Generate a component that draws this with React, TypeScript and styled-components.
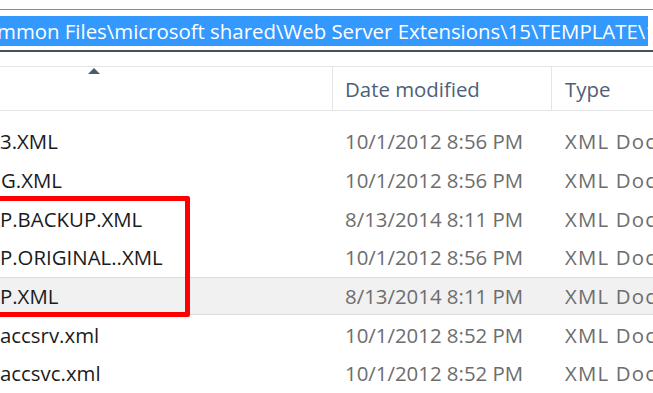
import React from "react";
import styled, { createGlobalStyle } from "styled-components";

const Global = createGlobalStyle`
  html, body { margin: 0; padding: 0; background: #ffffff; }
  body { font-family: "Open Sans", "Noto Sans", sans-serif; overflow: hidden; }
  * { box-sizing: border-box; }
`;

const Page = styled.div`
  position: relative;
  width: 653px;
  height: 393px;
  overflow: hidden;
  background: #ffffff;
`;

const AddressBar = styled.div`
  margin-top: 9px;
  border-top: 1px solid #8c8c8c;
  border-bottom: 2px solid #44505e;
  padding: 6px 0 4px 0;
`;

const Selection = styled.div`
  width: 648px;
  height: 30px;
  background: #3399ff;
  color: #ffffff;
  font-size: 20.4px;
  line-height: 30px;
  white-space: nowrap;
  overflow: hidden;
`;

const SelectionText = styled.span`
  display: inline-block;
  margin-left: -3px;
`;

const Columns = styled.div`
  display: grid;
  grid-template-columns: 333px 219px 1fr;
`;

const Header = styled(Columns)`
  margin-top: 14px;
  height: 45px;
  border-top: 1px solid #e5e5e5;
  border-bottom: 1px solid #e5e5e5;
`;

const HeaderCell = styled.div<{ $pad: number; $divider?: boolean }>`
  display: flex;
  align-items: center;
  padding-left: ${(p) => p.$pad}px;
  border-right: ${(p) => (p.$divider ? "1px solid #e5e5e5" : "none")};
  color: #4c607a;
  font-size: 20.4px;
  white-space: nowrap;
  overflow: hidden;
`;

const SortCell = styled(HeaderCell)`
  align-items: flex-start;
  padding-top: 1px;
`;

const SortArrow = styled.span`
  width: 0;
  height: 0;
  border-left: 6px solid transparent;
  border-right: 6px solid transparent;
  border-bottom: 6px solid #4d5b6d;
`;

const List = styled.div`
  padding-top: 11px;
`;

const Row = styled(Columns)<{ $selected?: boolean }>`
  height: 38.67px;
  background: ${(p) => (p.$selected ? "#f1f1f1" : "transparent")};
  border-top: 1px solid ${(p) => (p.$selected ? "#dcdcdc" : "transparent")};
  border-bottom: 1px solid ${(p) => (p.$selected ? "#dcdcdc" : "transparent")};
`;

const Cell = styled.div<{ $pad: number; $tone: "name" | "meta"; $spacing?: number }>`
  display: flex;
  align-items: center;
  padding-left: ${(p) => p.$pad}px;
  font-size: 20.4px;
  letter-spacing: ${(p) => p.$spacing ?? 0}px;
  color: ${(p) => (p.$tone === "name" ? "#1b1b1b" : "#6d6d6d")};
  white-space: nowrap;
  overflow: hidden;
`;

const Annotation = styled.div`
  position: absolute;
  left: -12px;
  top: 196px;
  width: 202px;
  height: 121px;
  border: 5px solid #ff0000;
  border-radius: 2px;
  pointer-events: none;
`;

type FileRow = { name: string; offset: number; date: string; selected?: boolean };

const rows: FileRow[] = [
  { name: "3.XML", offset: 0, date: "10/1/2012 8:56 PM" },
  { name: "G.XML", offset: 1, date: "10/1/2012 8:56 PM" },
  { name: "P.BACKUP.XML", offset: 0, date: "8/13/2014 8:11 PM" },
  { name: "P.ORIGINAL..XML", offset: 0, date: "10/1/2012 8:56 PM" },
  { name: "P.XML", offset: 0, date: "8/13/2014 8:11 PM", selected: true },
  { name: "accsrv.xml", offset: 0, date: "10/1/2012 8:52 PM" },
  { name: "accsvc.xml", offset: 0, date: "10/1/2012 8:52 PM" },
];

export default function App() {
  return (
    <>
      <Global />
      <Page>
        <AddressBar>
          <Selection>
            <SelectionText>
              mmon Files\microsoft shared\Web Server Extensions\15\TEMPLATE\1033
            </SelectionText>
          </Selection>
        </AddressBar>
        <Header>
          <SortCell $pad={88} $divider>
            <SortArrow />
          </SortCell>
          <HeaderCell $pad={12} $divider>Date modified</HeaderCell>
          <HeaderCell $pad={13}>Type</HeaderCell>
        </Header>
        <List>
          {rows.map((r, i) => (
            <Row key={i} $selected={r.selected}>
              <Cell $pad={r.offset} $tone="name">{r.name}</Cell>
              <Cell $pad={12} $tone="meta">{r.date}</Cell>
              <Cell $pad={13} $tone="meta" $spacing={1.2}>XML Document</Cell>
            </Row>
          ))}
        </List>
        <Annotation />
      </Page>
    </>
  );
}
